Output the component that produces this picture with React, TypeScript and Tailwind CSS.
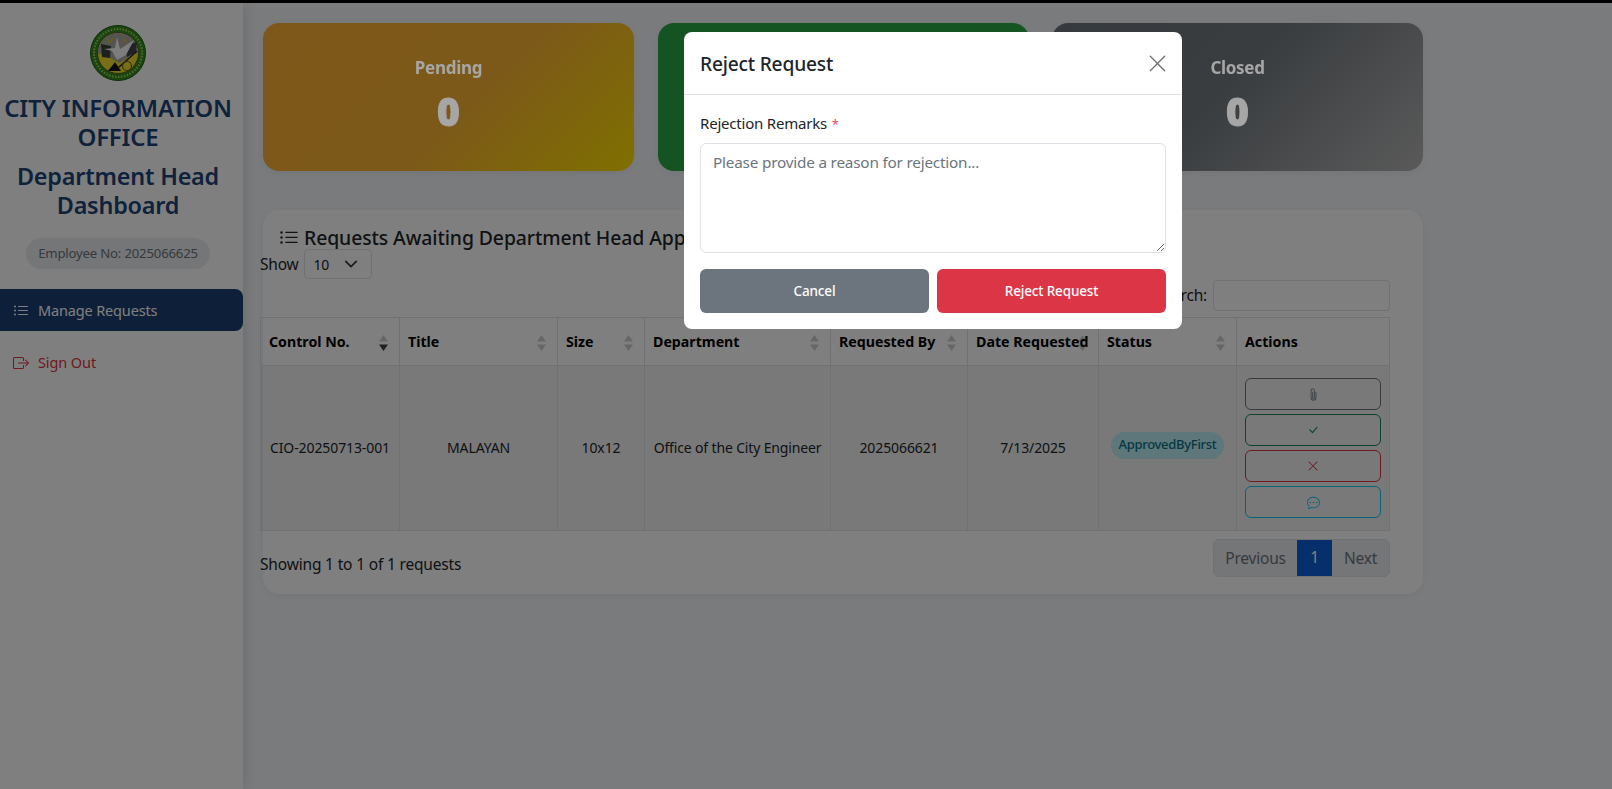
import { BsBoxArrowRight, BsChatDots, BsCheckLg, BsListUl, BsPaperclip, BsXLg } from 'react-icons/bs';

const stats = [
  { label: 'Pending', bg: 'bg-[linear-gradient(135deg,#fbb034_0%,#f9b233_55%,#ffe000_100%)]' },
  { label: 'Approved', bg: 'bg-[linear-gradient(135deg,#28a745_0%,#28a745_60%,#3cb043_100%)]' },
  { label: 'Closed', bg: 'bg-[linear-gradient(135deg,#6c757d_0%,#737a80_45%,#b4b4b4_100%)]' },
];

const columns = ['Control No.', 'Title', 'Size', 'Department', 'Requested By', 'Date Requested', 'Status', 'Actions'];

// Sort arrows in the table header
const SortArrows = ({ active }: { active?: boolean }) => (
  <svg width="11" height="18" viewBox="0 0 11 18" className="absolute right-[10px] top-[16px]">
    <path d="M5.5 1L10 7.5H1Z" fill="#000" fillOpacity="0.2" />
    <path d="M5.5 17L10 10.5H1Z" fill="#000" fillOpacity={active ? 0.75 : 0.2} />
  </svg>
);

const Logo = () => (
  <svg width="56" height="56" viewBox="0 0 56 56">
    <circle cx="28" cy="28" r="27.5" fill="#2f8f1c" stroke="#1c5a12" strokeWidth="1" />
    <circle cx="28" cy="28" r="24" fill="none" stroke="#b9c860" strokeWidth="2" strokeDasharray="1.5 1.5" />
    <circle cx="28" cy="28" r="20.5" fill="#f2de2a" stroke="#5a5a2a" strokeWidth="1" />
    <path d="M8 28A20 20 0 0 1 48 28L40 31L30 38L20 33Z" fill="#a8a8a0" />
    <path d="M11 19L21 21L20 33L12 32Z" fill="#3a3f38" />
    <path d="M35 21L47 17L46 27L37 32Z" fill="#3f4648" />
    <path d="M27 12L30 24L44 15L36 30L27 35L22 26L14 24L25 23Z" fill="#fafafa" />
    <path d="M17 13L20 18L23 13M33 13L36 18" stroke="#d8b830" strokeWidth="1.4" fill="none" />
    <path d="M18 46L25 37L31 46Z" fill="#111" />
    <path d="M28 43L47 26" stroke="#2a2a2a" strokeWidth="1.6" />
    <circle cx="37" cy="41" r="4.5" fill="none" stroke="#6b6420" strokeWidth="1.2" />
  </svg>
);

function Sidebar() {
  return (
    <aside className="w-[243px] shrink-0 bg-white shadow-[2px_0_12px_rgba(0,0,0,0.12)] flex flex-col items-center">
      <div className="flex w-full flex-col items-center pr-[7px]">
        <div className="mt-[22px]">
          <Logo />
        </div>
        <h1 className="mt-[13px] w-full text-center text-[24px] leading-[28.5px] font-semibold text-[#1c4478] tracking-[-0.2px] whitespace-pre-line">
          {'CITY INFORMATION\nOFFICE'}
        </h1>
        <h2 className="mt-[11px] w-[205px] text-center text-[23.4px] leading-[28.5px] font-semibold text-[#1c4478] tracking-[-0.2px]">
          Department Head Dashboard
        </h2>
        <div className="mt-[19px] h-[31px] w-[184px] rounded-full bg-[#e9ecef] flex items-center justify-center text-[13.2px] text-[#6c757d] tracking-[-0.2px]">
          Employee No: 2025066625
        </div>
      </div>
      <nav className="mt-[20px] w-full flex flex-col">
        <a className="h-[42px] pt-[1px] rounded-r-lg bg-[#1a3f72] flex items-center pl-[13px] gap-[9px] text-[14.5px] text-white tracking-[-0.15px]">
          <BsListUl className="text-[16px]" />
          Manage Requests
        </a>
        <a className="mt-[10px] h-[42px] pt-[1px] flex items-center pl-[13px] gap-[9px] text-[14.5px] text-[#dc3545] tracking-[-0.1px]">
          <BsBoxArrowRight className="text-[16px]" />
          Sign Out
        </a>
      </nav>
    </aside>
  );
}

function StatCard({ label, bg }: { label: string; bg: string }) {
  return (
    <div className={`h-[148px] w-[371px] rounded-2xl shadow-[0_2px_8px_rgba(0,0,0,0.06)] flex flex-col items-center ${bg}`}>
      <div className="relative z-[45] mt-[32px] text-[17px] leading-[26px] font-bold text-[#a6a6a6] tracking-[-0.3px]">{label}</div>
      <div className="relative z-[45] mt-[6px] text-[39px] leading-[48px] font-black text-[#a6a6a6] [-webkit-text-stroke:1px_#a6a6a6]">0</div>
    </div>
  );
}

function RequestsCard() {
  return (
    <section className="mt-[39px] w-[1160px] rounded-2xl bg-white shadow-[0_2px_8px_rgba(0,0,0,0.06)] pt-[14px] pb-[17px]">
      <h3 className="ml-[16px] h-[28px] flex items-center gap-[5px] text-[19.4px] font-medium text-[#212529] tracking-[-0.1px] whitespace-nowrap">
        <BsListUl className="text-[20px]" />
        Requests Awaiting Department Head Approval
      </h3>
      <div className="-ml-[3px] -mt-[3px] h-[30px] flex items-center text-[15.5px] text-[#212529] tracking-[-0.2px]">
        <span className="pt-[2px]">Show</span>
        <div className="ml-[5px] h-[30px] w-[68px] rounded border border-[#dee2e6] flex items-center justify-between pl-[9px] pr-[13px] text-[14px]">
          10
          <svg width="14" height="14" viewBox="0 0 16 16" fill="none" stroke="#343a40" strokeWidth="2" strokeLinecap="round" strokeLinejoin="round">
            <path d="M2 5l6 6 6-6" />
          </svg>
        </div>
      </div>
      <div className="-ml-[3px] mt-[1px] h-[31px] w-[1130px] flex items-center justify-end gap-[6px] text-[15.5px] text-[#212529] tracking-[-0.2px]">
        <span>Search:</span>
        <div className="h-[31px] w-[177px] rounded border border-[#dee2e6]" />
      </div>

      <table className="-ml-[3px] mt-[6px] w-[1129px] table-fixed border-collapse text-[14px] text-[#212529] tracking-[-0.1px]">
        <colgroup>
          <col className="w-[139px]" />
          <col className="w-[158px]" />
          <col className="w-[87px]" />
          <col className="w-[186px]" />
          <col className="w-[137px]" />
          <col className="w-[131px]" />
          <col className="w-[138px]" />
          <col className="w-[153px]" />
        </colgroup>
        <thead>
          <tr className="h-[48px]">
            {columns.map((c, i) => (
              <th key={c} className="relative border border-[#dee2e6] px-[8px] text-left text-[14.2px] font-bold text-black whitespace-nowrap tracking-normal">
                {c}
                {i < 7 && <SortArrows active={i === 0} />}
              </th>
            ))}
          </tr>
        </thead>
        <tbody>
          <tr className="h-[165px] bg-black/5 text-center">
            <td className="border border-[#dee2e6] px-[8px] pb-[2px] whitespace-nowrap">CIO-20250713-001</td>
            <td className="border border-[#dee2e6] px-[8px] pb-[2px]">MALAYAN</td>
            <td className="border border-[#dee2e6] px-[8px] pb-[2px]">10x12</td>
            <td className="border border-[#dee2e6] px-[8px] pb-[2px] whitespace-nowrap tracking-[-0.15px]">Office of the City Engineer</td>
            <td className="border border-[#dee2e6] px-[8px] pb-[2px]">2025066621</td>
            <td className="border border-[#dee2e6] px-[8px] pb-[2px]">7/13/2025</td>
            <td className="border border-[#dee2e6] px-[8px]">
              <span className="inline-flex h-[27px] -translate-y-[3px] items-center rounded-full bg-[#bdeef5] px-[8px] text-[13px] font-medium text-[#0b7285] whitespace-nowrap tracking-[-0.3px]">
                ApprovedByFirst
              </span>
            </td>
            <td className="border border-[#dee2e6] px-[8px]">
              <div className="flex flex-col gap-[4px]">
                <button className="h-[32px] rounded-md border border-[#6c757d] text-[#6c757d] flex items-center justify-center text-[13px]">
                  <BsPaperclip />
                </button>
                <button className="h-[32px] rounded-md border border-[#198754] text-[#198754] flex items-center justify-center text-[12px]">
                  <BsCheckLg />
                </button>
                <button className="h-[32px] rounded-md border border-[#dc3545] text-[#dc3545] flex items-center justify-center text-[12px]">
                  <BsXLg />
                </button>
                <button className="h-[32px] rounded-md border border-[#0dcaf0] text-[#0dcaf0] flex items-center justify-center text-[13px]">
                  <BsChatDots />
                </button>
              </div>
            </td>
          </tr>
        </tbody>
      </table>

      <div className="-ml-[3px] mt-[8px] w-[1130px] flex justify-between">
        <span className="mt-[14px] text-[15.5px] leading-[22px] text-[#212529] tracking-[-0.17px]">Showing 1 to 1 of 1 requests</span>
        <div className="h-[38px] w-[177px] pt-[1px] rounded-md border border-[#dee2e6] bg-[#e9ecef] flex items-center overflow-hidden text-[15.5px] text-[#6c757d] tracking-[-0.2px]">
          <span className="w-[83px] text-center">Previous</span>
          <span className="-mt-[1px] h-[calc(100%+1px)] w-[35px] bg-[#0d5fd6] text-white flex items-center justify-center">1</span>
          <span className="flex-1 text-center">Next</span>
        </div>
      </div>
    </section>
  );
}

function RejectModal() {
  return (
    <div className="fixed left-[684px] top-[32px] z-50 h-[297px] w-[498px] rounded-lg bg-white text-[#212529] flex flex-col">
      <div className="h-[63px] shrink-0 border-b border-[#dee2e6] flex items-center justify-between pl-[16px] pr-[14px]">
        <h5 className="pt-[2px] text-[19.2px] font-medium tracking-[-0.2px]">Reject Request</h5>
        <BsXLg className="text-[21px] text-[#6f6f6f]" />
      </div>
      <div className="px-[16px]">
        <label className="mt-[18px] block h-[20px] text-[15px] leading-[20px] tracking-[-0.2px]">
          Rejection Remarks <span className="ml-[1px] text-[13px] text-[#e2505e]">*</span>
        </label>
        <textarea
          className="mt-[10px] block h-[110px] w-full rounded-md border border-[#dee2e6] px-[12px] py-[6px] text-[15.3px] leading-[24px] tracking-[-0.2px] placeholder:text-[#6c757d] outline-none"
          placeholder="Please provide a reason for rejection..."
        />
        <div className="mt-[16px] flex gap-[8px]">
          <button className="h-[44px] flex-1 rounded-md bg-[#6c757d] text-[13.5px] text-white font-medium tracking-[-0.15px]">Cancel</button>
          <button className="h-[44px] flex-1 rounded-md bg-[#dc3545] text-[13.5px] text-white font-medium tracking-[-0.15px]">Reject Request</button>
        </div>
      </div>
    </div>
  );
}

export default function App() {
  return (
    <div className="h-[789px] overflow-hidden bg-[#f5f7f9] font-['Noto_Sans',sans-serif] flex flex-col">
      <div className="h-[3px] shrink-0 bg-black relative z-50" />
      <div className="flex flex-1 min-h-0">
        <Sidebar />
        <main className="flex-1 pl-[20px] pt-[20px]">
          <div className="flex gap-[23.5px] w-[1160px]">
            {stats.map((s) => (
              <StatCard key={s.label} {...s} />
            ))}
          </div>
          <RequestsCard />
        </main>
      </div>
      <div className="fixed inset-0 z-40 bg-black/50" />
      <RejectModal />
    </div>
  );
}
